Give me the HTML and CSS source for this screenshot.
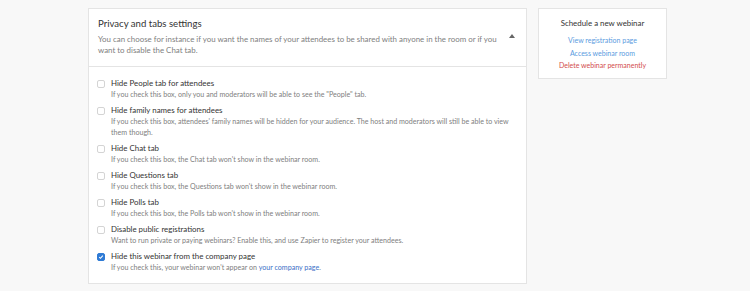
FILE: index.html
```html
<!DOCTYPE html>
<html lang="en">
<head>
  <meta charset="UTF-8" />
  <title>Privacy and tabs settings</title>
  <link rel="stylesheet" href="styles.css">
</head>
<body>
  <div class="page">
    <div class="card settings">
      <div class="settings-head">
        <div class="head-text">
          <h2>Privacy and tabs settings</h2>
          <p>You can choose for instance if you want the names of your attendees to be shared with anyone in the room or if you want to disable the Chat tab.</p>
        </div>
        <span class="caret"></span>
      </div>

      <div class="settings-body">
        <label class="option">
          <span class="box"></span>
          <div>
            <div class="option-title">Hide People tab for attendees</div>
            <div class="option-desc">If you check this box, only you and moderators will be able to see the "People" tab.</div>
          </div>
        </label>
        <label class="option">
          <span class="box"></span>
          <div>
            <div class="option-title">Hide family names for attendees</div>
            <div class="option-desc">If you check this box, attendees' family names will be hidden for your audience. The host and moderators will still be able to view them though.</div>
          </div>
        </label>
        <label class="option">
          <span class="box"></span>
          <div>
            <div class="option-title">Hide Chat tab</div>
            <div class="option-desc">If you check this box, the Chat tab won't show in the webinar room.</div>
          </div>
        </label>
        <label class="option">
          <span class="box"></span>
          <div>
            <div class="option-title">Hide Questions tab</div>
            <div class="option-desc">If you check this box, the Questions tab won't show in the webinar room.</div>
          </div>
        </label>
        <label class="option">
          <span class="box"></span>
          <div>
            <div class="option-title">Hide Polls tab</div>
            <div class="option-desc">If you check this box, the Polls tab won't show in the webinar room.</div>
          </div>
        </label>
        <label class="option">
          <span class="box"></span>
          <div>
            <div class="option-title">Disable public registrations</div>
            <div class="option-desc">Want to run private or paying webinars? Enable this, and use Zapier to register your attendees.</div>
          </div>
        </label>
        <label class="option">
          <span class="box checked">
            <svg width="8" height="8" viewBox="0 0 8 8"><path d="M1.6 4.1 L3.3 5.7 L6.4 2.2" fill="none" stroke="#fff" stroke-width="1.4"/></svg>
          </span>
          <div>
            <div class="option-title">Hide this webinar from the company page</div>
            <div class="option-desc">If you check this, your webinar won't appear on <a href="#">your company page</a>.</div>
          </div>
        </label>
      </div>
    </div>

    <div class="card sidebar">
      <h3>Schedule a new webinar</h3>
      <a href="#">View registration page</a>
      <a href="#">Access webinar room</a>
      <a href="#" class="danger">Delete webinar permanently</a>
    </div>
  </div>
</body>
</html>
```

FILE: styles.css
```css
body, html {
  margin: 0;
  padding: 0;
  background-color: #f8f8f8;
  font-family: 'Lato', sans-serif;
  color: #333;
}

.page {
  display: flex;
  align-items: flex-start;
  gap: 11px;
  padding: 8px 0 0 88px;
}

.card {
  background: #fff;
  border: 1px solid #e4e4e4;
  box-sizing: border-box;
}

.settings {
  width: 439px;
}

.settings-head {
  display: flex;
  align-items: center;
  padding: 8px 10px 10px 9px;
  border-bottom: 1px solid #e4e4e4;
}

.head-text {
  width: 406px;
}

.settings-head h2 {
  margin: 0 0 4px 0;
  font-size: 9.6px;
  line-height: 13px;
  font-weight: 400;
  color: #333;
}

.settings-head p {
  margin: 0;
  font-size: 7.9px;
  line-height: 11px;
  color: #808080;
}

.caret {
  width: 0;
  height: 0;
  border-left: 3px solid transparent;
  border-right: 3px solid transparent;
  border-bottom: 4px solid #666;
  margin: 0 0 2px 5px;
}

.settings-body {
  padding: 11px 10px 5px 8px;
}

.option {
  display: flex;
  align-items: flex-start;
  gap: 6px;
  margin-bottom: 5px;
}

.box {
  flex: none;
  width: 8px;
  height: 8px;
  margin-top: 2px;
  border: 1px solid #d4d4d4;
  border-radius: 2px;
  box-sizing: border-box;
  display: flex;
  align-items: center;
  justify-content: center;
}

.box.checked {
  background: #2f7bd5;
  border-color: #2f7bd5;
}

.option-title {
  font-size: 7.9px;
  line-height: 11px;
  color: #333;
}

.option-desc {
  font-size: 7.1px;
  line-height: 11px;
  color: #808080;
}

.option-desc a {
  color: #3b6fc7;
  text-decoration: none;
}

.sidebar {
  width: 129px;
  padding: 9px 0 6px 0;
  text-align: center;
  display: flex;
  flex-direction: column;
}

.sidebar h3 {
  margin: 0 0 5px 0;
  font-size: 7.9px;
  line-height: 11px;
  font-weight: 400;
  color: #333;
}

.sidebar a {
  font-size: 7px;
  line-height: 12.5px;
  color: #5a9be0;
  text-decoration: none;
}

.sidebar a.danger {
  color: #d24c4c;
}
```
